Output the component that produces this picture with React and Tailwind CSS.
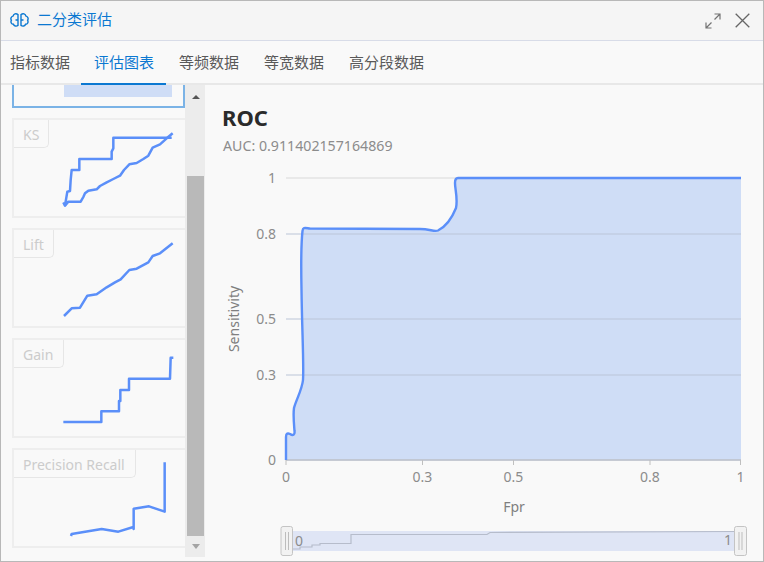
const cjk = 'font-["Noto_Sans","Noto_Sans_CJK_SC",sans-serif]';

const tabs = ['指标数据', '评估图表', '等频数据', '等宽数据', '高分段数据'];

const thumbs = [
  {
    name: 'KS',
    tagWidth: 'w-[35px]',
    viewBox: '36 102 522 300',
    lines: [
      '195,362 202,320 210,318 212,285 215,255 238,255 238,222 335,222 335,200 340,190 340,158 515,158',
      '190,352 195,362 205,350 242,350 250,336 255,325 265,317 290,313 300,303 320,292 340,282 360,272 372,255 388,238 410,234 430,222 445,212 458,188 480,178 500,160 518,145',
    ],
  },
  {
    name: 'Lift',
    tagWidth: 'w-[40px]',
    viewBox: '36 432 522 300',
    lines: ['192,693 215,670 240,668 262,632 290,628 320,607 345,592 362,583 388,555 410,551 445,532 458,513 480,505 518,475'],
  },
  {
    name: 'Gain',
    tagWidth: 'w-[50px]',
    viewBox: '36 42 522 300',
    lines: ['190,291 304,291 304,259 357,259 357,228 361,228 361,195 387,195 387,161 510,161 512,98 520,98'],
  },
  {
    name: 'Precision Recall',
    tagWidth: 'w-[122px]',
    viewBox: '36 372 522 300',
    lines: ['213,633 215,627 305,612 355,620 400,606 401,612 401,551 447,544 494,560 494,412'],
  },
];

const yTicks = [
  { label: '1', y: 178 },
  { label: '0.8', y: 234 },
  { label: '0.5', y: 319 },
  { label: '0.3', y: 375 },
  { label: '0', y: 460 },
];

const xTicks = [
  { label: '0', x: 286 },
  { label: '0.3', x: 422.5 },
  { label: '0.5', x: 513.5 },
  { label: '0.8', x: 650 },
  { label: '1', x: 740.5 },
];

const rocPath =
  'M286 460 L286 437 C286 433 288 433 290 434 C293 436 295 435 294.5 431 C294 425 293 415 294 408 C296 400 302 390 303 380 C304 365 302 330 301.5 290 C301 265 301.5 240 302.5 231 C303 227 305 228 310 228.5 L420 229 C430 229 434 232 438 230.5 C445 227 452 218 456 208 C458 198 455 190 455 183 C455 179 456 178 458 178 L741 178';

const Thumb = ({ item }) => (
  <div className="relative w-[173px] h-[100px] shrink-0 border-2 border-r-0 border-[#eeeeee]">
    <div className={`absolute left-0 top-0 ${item.tagWidth} h-[28px] pl-[9px] leading-[29px] text-[14px] text-[#cccccc] border-r border-b border-[#e6e6e6] rounded-br-[5px] whitespace-nowrap`}>
      {item.name}
    </div>
    <svg viewBox={item.viewBox} className="absolute -left-[2px] -top-[1px] w-[174px] h-[100px]" fill="none">
      {item.lines.map((points) => (
        <polyline key={points} points={points} stroke="#5b8ff9" strokeWidth="7.5" strokeLinejoin="round" />
      ))}
    </svg>
  </div>
);

const RocChart = () => (
  <svg viewBox="205 165 558 396" className="block w-[558px] h-[396px]" style={{ fontFamily: '"Noto Sans", sans-serif' }}>
    <path d={`${rocPath} L741 460 Z`} fill="#cfddf6" />
    {yTicks.map((t) => (
      <g key={t.label}>
        <line x1="286" x2="741" y1={t.y} y2={t.y} stroke={t.y === 178 ? '#d9d9d9' : '#bcc6d8'} strokeWidth="1.2" />
        <text x="276" y={t.y + 5} textAnchor="end" fontSize="14" fill="#8c8c8c">{t.label}</text>
      </g>
    ))}
    <line x1="286" x2="741" y1="460" y2="460" stroke="#bfc3cc" strokeWidth="1.5" />
    {xTicks.map((t) => (
      <g key={t.label}>
        <line x1={t.x} x2={t.x} y1="460" y2="465" stroke="#bfbfbf" />
        <text x={t.x} y="482" textAnchor="middle" fontSize="14" fill="#8c8c8c">{t.label}</text>
      </g>
    ))}
    <path d={rocPath} fill="none" stroke="#5b8ff9" strokeWidth="2.4" strokeLinejoin="round" />
    <text x="514" y="512" textAnchor="middle" fontSize="14" fill="#7f7f7f">Fpr</text>
    <text transform="translate(239 319) rotate(-90)" textAnchor="middle" fontSize="14" fill="#7f7f7f">Sensitivity</text>

    <rect x="292" y="531" width="443" height="20" fill="#dfe5f5" />
    <path d="M293 549 L300 549 L300 547 L312 547 L312 545 L320 545 L320 543.5 L351 543.5 L351 534.5 L487 534.5 L490 532.5 L735 531.5" fill="none" stroke="#b6bccb" strokeWidth="1.2" />
    <text x="295" y="546" fontSize="14" fill="#8c8c8c">0</text>
    <text x="724" y="545" fontSize="14" fill="#8c8c8c">1</text>
    <rect x="281" y="526.5" width="11.5" height="29" rx="2" fill="#f2f2f2" stroke="#c4c4c4" />
    <path d="M285.5 532 V550 M288.5 532 V550" stroke="#bdbdbd" />
    <rect x="734.5" y="526.5" width="12" height="29" rx="2" fill="#f2f2f2" stroke="#c4c4c4" />
    <path d="M739 532 V550 M742 532 V550" stroke="#bdbdbd" />
  </svg>
);

export default function App() {
  return (
    <div className={`w-[764px] h-[562px] overflow-hidden flex flex-col border border-[#b8b8b8] bg-[#f9f9f9] ${cjk}`}>
      <div className="h-[40px] shrink-0 flex items-center justify-between pl-[9px] pr-[13px] bg-[#f5f5f5] border-b border-[#d8dce8]">
        <div className="flex items-center gap-[8px] -mt-[2px] text-[15px] text-[#0b78d1]">
          <svg viewBox="0 0 19 14" className="w-[19px] h-[14px]" fill="none" stroke="#0b78d1" strokeWidth="1.4">
            <path d="M8 1.5 C6 0 3.5 0.8 3.3 2.8 C1 3.5 0.3 6 1.4 7.2 C0.4 9 1.4 11.3 3.4 11.3 C4 13.2 6.4 13.6 8 12.4 Z" />
            <path d="M11 1.5 C13 0 15.5 0.8 15.7 2.8 C18 3.5 18.7 6 17.6 7.2 C18.6 9 17.6 11.3 15.6 11.3 C15 13.2 12.6 13.6 11 12.4 Z" />
            <path d="M8 7 H5.5 M11 7 H13.5" />
          </svg>
          <span>二分类评估</span>
        </div>
        <div className="flex items-center gap-[14px]">
          <svg viewBox="0 0 16 16" className="w-[16px] h-[16px]" fill="none" stroke="#737373" strokeWidth="1.2">
            <path d="M1 15 L6.5 9.5 M1 9.5 V15 H6.5 M9.5 6.5 L15 1 M9.5 1 H15 V6.5" />
          </svg>
          <svg viewBox="0 0 15 15" className="w-[15px] h-[15px]" fill="none" stroke="#666666" strokeWidth="1.3">
            <path d="M0.7 0.7 L14.3 14.3 M14.3 0.7 L0.7 14.3" />
          </svg>
        </div>
      </div>

      <div className="h-[44px] shrink-0 flex items-stretch pt-[1px] border-b-2 border-[#e8e8e8] text-[15px] text-[#595959]">
        {tabs.map((tab, i) => (
          <div
            key={tab}
            className={`relative flex items-center whitespace-nowrap ${i === 0 ? 'ml-[9px]' : i === 1 ? 'ml-[24px] text-[#0b78d1]' : 'ml-[25px]'}`}
          >
            {tab}
            {i === 1 && <div className="absolute -left-[13px] -right-[12px] -bottom-[2px] h-[2px] bg-[#0b78d1]" />}
          </div>
        ))}
      </div>

      <div className="flex-1 flex min-h-0">
        <div className="w-[173px] ml-[11px] shrink-0 flex flex-col gap-[10px] overflow-hidden">
          <div className="h-[23px] shrink-0 border-2 border-t-0 border-[#7bb3e6]">
            <div className="ml-[50px] w-[108px] h-[12px] bg-[#cfddf6]" />
          </div>
          {thumbs.map((item) => (
            <Thumb key={item.name} item={item} />
          ))}
        </div>

        <div className="w-[20px] h-[472px] shrink-0 pl-[2px] pr-[1px] flex flex-col bg-[#ececec]">
          <div className="h-[91px] pt-[10px] pl-[5px]">
            <svg viewBox="0 0 8 4" className="block w-[8px] h-[4px]"><path d="M0 4 L4 0 L8 4 Z" fill="#555555" /></svg>
          </div>
          <div className="h-[360px] bg-[#b9b9b9]" />
          <div className="h-[21px] pt-[8px] pl-[5px]">
            <svg viewBox="0 0 8 5" className="block w-[8px] h-[5px]"><path d="M0 0 L8 0 L4 5 Z" fill="#a3a3a3" /></svg>
          </div>
        </div>

        <div className="flex-1 min-w-0 flex flex-col">
          <div className="h-[80px] shrink-0 pl-[17px] pt-[17px]">
            <h1 className="text-[22px] leading-[30px] font-bold text-[#2b2b2b]">ROC</h1>
            <p className="mt-[4px] ml-px text-[14.2px] leading-[20px] text-[#8c8c8c]">AUC: 0.911402157164869</p>
          </div>
          <RocChart />
        </div>
      </div>
    </div>
  );
}
